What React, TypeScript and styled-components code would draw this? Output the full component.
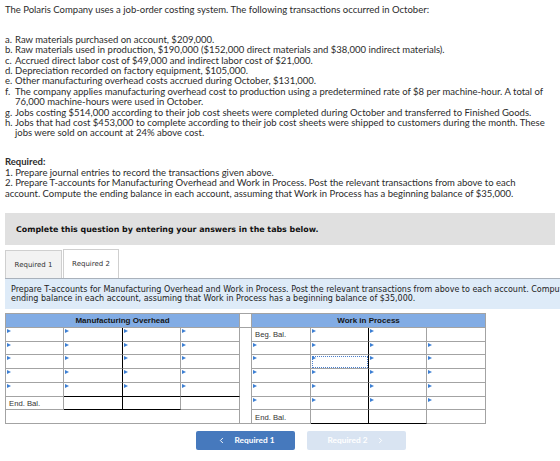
import styled, { createGlobalStyle } from "styled-components";
import { ChevronLeft, ChevronRight } from "lucide-react";

const GlobalStyle = createGlobalStyle`
  *, *::before, *::after { box-sizing: border-box; }
  html, body { margin: 0; padding: 0; overflow: hidden; background: #fff; }
  body {
    font-family: Lato, "Open Sans", sans-serif;
    color: #2b2b2b;
  }
`;

const Page = styled.div`
  padding: 5px 0 0 5px;
  width: 640px;
`;

const Para = styled.p`
  margin: 0;
  font-size: 9.5px;
  line-height: 10.4px;
  white-space: nowrap;
`;

const List = styled.ol`
  list-style: none;
  margin: 19.4px 0 0;
  padding: 0;
  font-size: 9.5px;
  line-height: 10.4px;
`;

const Item = styled.li`
  display: flex;
  white-space: nowrap;
`;

const Marker = styled.span`
  flex: none;
  width: 10px;
`;

const Required = styled.div`
  margin-top: 18.6px;
  font-size: 9.5px;
  line-height: 10.4px;
  white-space: nowrap;
  strong { font-weight: 700; }
`;

const Notice = styled.div`
  margin-top: 14px;
  width: 550px;
  height: 32px;
  display: flex;
  align-items: center;
  padding-left: 11px;
  background: #e0e0e0;
  font: 700 7.9px "DejaVu Sans", Verdana, sans-serif;
  color: #111;
`;

const TabBar = styled.div`
  margin-top: 4px;
  display: flex;
  align-items: flex-end;
  gap: 1px;
  height: 30px;
  border-bottom: 1px solid #a9b1bb;
`;

const Tab = styled.div<{ $active?: boolean }>`
  height: ${(p) => (p.$active ? 29 : 28)}px;
  width: ${(p) => (p.$active ? 56 : 57)}px;
  display: flex;
  align-items: center;
  justify-content: center;
  border: 1px solid #cfcfcf;
  border-bottom: none;
  background: ${(p) => (p.$active ? "#fff" : "#f2f2f2")};
  font: 400 7px "DejaVu Sans", Verdana, sans-serif;
  color: #333;
`;

const Instructions = styled.div`
  height: 30px;
  display: flex;
  flex-direction: column;
  justify-content: center;
  padding-left: 6px;
  background: #deebf8;
  font: 400 8px "DejaVu Sans", Verdana, sans-serif;
  line-height: 9.4px;
  color: #222;
  white-space: nowrap;
`;

const TTable = styled.table`
  margin-top: 4px;
  width: 481px;
  table-layout: fixed;
  border-collapse: separate;
  border-spacing: 0;
  border-top: 1px solid #a3a3a3;
  border-left: 1px solid #a3a3a3;
`;

const Head = styled.th`
  height: 14px;
  padding: 0;
  background: #82ace4;
  border-right: 1px solid #a3a3a3;
  border-bottom: 1px solid #a3a3a3;
  font: 700 8px "Liberation Sans", Arial, sans-serif;
  color: #151515;
  text-align: center;
`;

const Gap = styled.td`
  padding: 0;
  background: #fff;
  border-right: 1px solid #a3a3a3;
  border-bottom: 1px solid #a3a3a3;
`;

type CellProps = {
  $arrow?: boolean;
  $darkRight?: boolean;
  $darkBottom?: boolean;
  $focus?: boolean;
};

const Cell = styled.td<CellProps>`
  position: relative;
  height: 13.7px;
  padding: 1px 0 0 3px;
  border-right: 1px solid ${(p) => (p.$darkRight ? "#000" : "#a3a3a3")};
  border-bottom: 1px solid ${(p) => (p.$darkBottom ? "#000" : "#a3a3a3")};
  font: 400 7.7px "Liberation Sans", Arial, sans-serif;
  color: #333;
  vertical-align: middle;
  white-space: nowrap;
  outline: ${(p) => (p.$focus ? "1px dotted #4b7fcc" : "none")};
  outline-offset: -2px;

  &::before {
    content: "";
    display: ${(p) => (p.$arrow ? "block" : "none")};
    position: absolute;
    left: 1px;
    top: 1px;
    border-left: 4px solid #3d7fd3;
    border-top: 2.5px solid transparent;
    border-bottom: 2.5px solid transparent;
  }
`;

const ButtonRow = styled.div`
  margin-top: 7px;
  padding-left: 191px;
  display: flex;
  gap: 12px;
`;

const NavButton = styled.button<{ $disabled?: boolean }>`
  width: 99px;
  height: 19px;
  padding: 0;
  border: none;
  border-radius: 2px;
  display: flex;
  align-items: center;
  justify-content: center;
  gap: 9px;
  background: ${(p) => (p.$disabled ? "#d9e4f2" : "#4679bd")};
  color: #fff;
  font: 700 8.3px Lato, "Open Sans", sans-serif;
`;

const accountCols = [58, 59, 58, 59, 12, 59, 58, 58, 59];

function TAccounts() {
  const arrows = [1, 2, 3, 4];
  return (
    <TTable>
      <colgroup>
        {accountCols.map((w, i) => (
          <col key={i} style={{ width: w }} />
        ))}
      </colgroup>
      <tbody>
        <tr>
          <Head colSpan={4}>Manufacturing Overhead</Head>
          <Gap />
          <Head colSpan={4}>Work in Process</Head>
        </tr>
        <tr>
          <Cell $arrow />
          <Cell $arrow $darkRight />
          <Cell $arrow />
          <Cell $arrow />
          <Gap rowSpan={7} />
          <Cell>Beg. Bal.</Cell>
          <Cell $arrow $darkRight />
          <Cell $arrow />
          <Cell />
        </tr>
        {arrows.map((row) => (
          <tr key={row}>
            <Cell $arrow />
            <Cell $arrow $darkRight $darkBottom={row === 4} />
            <Cell $arrow $darkBottom={row === 4} />
            <Cell $arrow $darkBottom={row === 4} />
            <Cell $arrow />
            <Cell $arrow $darkRight $focus={row === 2} />
            <Cell $arrow />
            <Cell $arrow />
          </tr>
        ))}
        <tr>
          <Cell>End. Bal.</Cell>
          <Cell $darkRight $darkBottom />
          <Cell $darkBottom />
          <Cell />
          <Cell $arrow />
          <Cell $arrow $darkRight />
          <Cell $arrow />
          <Cell $arrow />
        </tr>
        <tr>
          <Cell colSpan={4} />
          <Cell>End. Bal.</Cell>
          <Cell $darkRight $darkBottom />
          <Cell $darkBottom />
          <Cell />
        </tr>
      </tbody>
    </TTable>
  );
}

export default function App() {
  return (
    <>
      <GlobalStyle />
      <Page>
        <Para>
          The Polaris Company uses a job-order costing system. The following transactions occurred in October:
        </Para>
        <List>
          <Item><Marker>a.</Marker><span>Raw materials purchased on account, $209,000.</span></Item>
          <Item><Marker>b.</Marker><span>Raw materials used in production, $190,000 ($152,000 direct materials and $38,000 indirect materials).</span></Item>
          <Item><Marker>c.</Marker><span>Accrued direct labor cost of $49,000 and indirect labor cost of $21,000.</span></Item>
          <Item><Marker>d.</Marker><span>Depreciation recorded on factory equipment, $105,000.</span></Item>
          <Item><Marker>e.</Marker><span>Other manufacturing overhead costs accrued during October, $131,000.</span></Item>
          <Item>
            <Marker>f.</Marker>
            <span>
              The company applies manufacturing overhead cost to production using a predetermined rate of $8 per machine-hour. A total of
              <br />
              76,000 machine-hours were used in October.
            </span>
          </Item>
          <Item><Marker>g.</Marker><span>Jobs costing $514,000 according to their job cost sheets were completed during October and transferred to Finished Goods.</span></Item>
          <Item>
            <Marker>h.</Marker>
            <span>
              Jobs that had cost $453,000 to complete according to their job cost sheets were shipped to customers during the month. These
              <br />
              jobs were sold on account at 24% above cost.
            </span>
          </Item>
        </List>
        <Required>
          <strong>Required:</strong>
          <br />
          1. Prepare journal entries to record the transactions given above.
          <br />
          2. Prepare T-accounts for Manufacturing Overhead and Work in Process. Post the relevant transactions from above to each
          <br />
          account. Compute the ending balance in each account, assuming that Work in Process has a beginning balance of $35,000.
        </Required>
        <Notice>Complete this question by entering your answers in the tabs below.</Notice>
        <TabBar>
          <Tab>Required 1</Tab>
          <Tab $active>Required 2</Tab>
        </TabBar>
        <Instructions>
          <span>
            Prepare T-accounts for Manufacturing Overhead and Work in Process. Post the relevant transactions from above to each account. Compute the
          </span>
          <span>ending balance in each account, assuming that Work in Process has a beginning balance of $35,000.</span>
        </Instructions>
        <TAccounts />
        <ButtonRow>
          <NavButton>
            <ChevronLeft size={9} strokeWidth={2.5} />
            Required 1
          </NavButton>
          <NavButton $disabled>
            Required 2
            <ChevronRight size={9} strokeWidth={2.5} />
          </NavButton>
        </ButtonRow>
      </Page>
    </>
  );
}
